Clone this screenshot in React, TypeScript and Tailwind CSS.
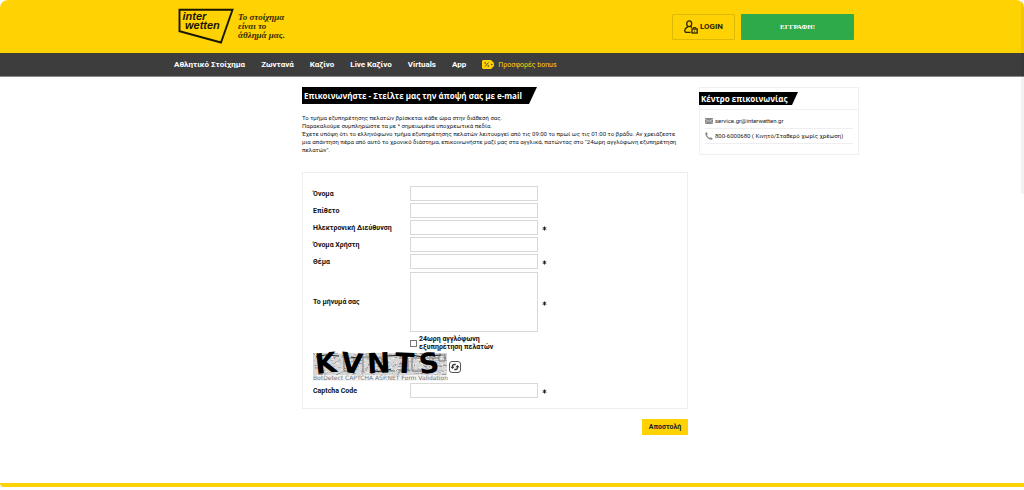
import React from "react";

const navItems = ["Αθλητικό Στοίχημα", "Ζωντανά", "Καζίνο", "Live Καζίνο", "Virtuals", "App"];

const fields = [
  { id: "first-name", label: "Όνομα", required: false },
  { id: "last-name", label: "Επίθετο", required: false },
  { id: "email", label: "Ηλεκτρονική Διεύθυνση", required: true },
  { id: "username", label: "Όνομα Χρήστη", required: false },
  { id: "subject", label: "Θέμα", required: true },
];

const captcha = [
  { letter: "K", style: "-rotate-6" },
  { letter: "V", style: "rotate-6" },
  { letter: "N", style: "-rotate-3" },
  { letter: "T", style: "rotate-3" },
  { letter: "S", style: "-rotate-6" },
];

const specks = Array.from({ length: 420 }, (_, i) => ({
  x: (i * 47 + ((i * i) % 31) * 5) % 133,
  y: (i * 13 + ((i * i) % 17) * 3) % 22,
  w: 1 + (i % 3),
  dark: i % 4 === 0,
}));

function Logo() {
  return (
    <svg viewBox="0 0 56 38" className="h-[38px] w-14" role="img" aria-label="Interwetten">
      <path d="M1.5 1.8H54.5L43 34.5 1.5 23.2Z" fill="none" stroke="#1a1700" strokeWidth="1.9" />
      <g fontFamily="Liberation Sans, Arial, sans-serif" fontWeight="700" fontStyle="italic" fontSize="11" fill="#1a1700">
        <text x="4.5" y="12">inter</text>
        <text x="7" y="21">wetten</text>
      </g>
    </svg>
  );
}

function UserLock() {
  return (
    <svg viewBox="0 0 14 14" className="h-3.5 w-3.5 shrink-0" fill="none" stroke="#2b2400" strokeWidth="1.3" aria-hidden="true">
      <ellipse cx="5.2" cy="3.7" rx="2.5" ry="2.9" />
      <path d="M3.8 6.3C3.5 7.9.8 7.5.8 10.4c0 1.3.6 1.9 1.8 1.9h4M6.6 6.3c.3.8 1 .9 1.6 1.2" />
      <rect x="8" y="9" width="5.2" height="4" />
      <path d="M9.3 9V7.5h2.6V9M10.6 10.5v1.2" strokeWidth="0.9" />
    </svg>
  );
}

function Star() {
  return (
    <svg viewBox="0 0 5 5" className="mt-[2px] h-[5px] w-[5px]" stroke="#222" strokeWidth="1" aria-hidden="true">
      <path d="M2.5 .5v4M.7 1.5l3.6 2M4.3 1.5l-3.6 2" />
    </svg>
  );
}

function Captcha() {
  return (
    <div className="w-[134px] shrink-0">
      <div className="relative h-[22px] bg-[#d6d6d6]">
        <svg viewBox="0 0 134 22" className="absolute inset-0 h-full w-full" aria-hidden="true">
          {specks.map((s, i) => (
            <rect key={i} x={s.x} y={s.y} width={s.w} height="1" fill={s.dark ? "#999" : i % 2 ? "#b8b8b8" : "#ececec"} />
          ))}
          <path
            d="M31 5h10v13H31zM44 4h12M50 4v14M60 5h9v5h-9v8h9M74 5v13h8M86 5h9M86 11h8M86 18h9V5M99 5h11M99 5v13h11M114 5h12M120 5v12M126 2h6v6h-6z"
            fill="none"
            stroke="#777"
            strokeWidth="1"
          />
          <path d="M3 4l9-2 14 1M38 4l6 1M60 18l10 1 8-3M72 3l26-1 12 2M116 3l12-1" fill="none" stroke="#222" strokeWidth="1" />
        </svg>
        <div className="relative flex h-full items-center justify-between pr-2 pl-[2px] font-['DejaVu_Sans',sans-serif] text-[28px] leading-[22px] font-bold text-black">
          {captcha.map((c) => (
            <span key={c.letter} className={c.style}>{c.letter}</span>
          ))}
        </div>
      </div>
      <p className="bg-[#f3f3f3] text-center font-['DejaVu_Sans',sans-serif] text-[6px] leading-[6px] font-normal whitespace-nowrap text-[#777]">
        BotDetect CAPTCHA ASP.NET Form Validation
      </p>
    </div>
  );
}

const inputStyle = "w-32 border border-[#d8d8d8] bg-white px-1 text-[7px] outline-none";

export default function App() {
  return (
    <div className="relative flex min-h-screen flex-col bg-white font-[Roboto,'Liberation_Sans',sans-serif] text-[7px] leading-2 text-[#222]">
      <div className="absolute top-0 right-0 h-[194px] w-[3px] bg-black/5" />
      <header className="rounded-t-lg bg-[#ffd204]">
        <div className="mx-auto flex h-[53px] max-w-[694px] items-center px-[5px]">
          <a href="#" className="ml-2 flex items-center gap-1">
            <Logo />
            <span className="font-['Liberation_Serif',serif] text-[9px] leading-[9px] font-bold text-[#332a00] italic">
              Το στοίχημα<br />είναι το<br />άθλημά μας.
            </span>
          </a>
          <div className="ml-auto flex gap-[6px]">
            <button className="flex h-[26px] w-[63px] items-center justify-center gap-[2px] rounded-[1px] border border-[#dfb800] text-[8px] font-bold text-[#2b2400]">
              <UserLock />
              LOGIN
            </button>
            <button className="h-[26px] w-[113px] rounded-[1px] bg-[#2eaa4a] font-['Liberation_Serif',serif] text-[7px] font-bold text-white">
              ΕΓΓΡΑΦΗ!
            </button>
          </div>
        </div>
      </header>

      <nav className="border-b border-[#8a8a8a] bg-[#3d3d3d]">
        <ul className="mx-auto flex h-[23px] max-w-[694px] items-center gap-4 px-[9px] text-[8px] font-bold text-white">
          {navItems.map((n) => (
            <li key={n}><a href="#">{n}</a></li>
          ))}
          <li>
            <a href="#" className="flex items-center gap-1 text-[7px] font-normal text-[#ffd204]">
              <svg viewBox="0 0 12 9" className="h-[9px] w-3" aria-hidden="true">
                <path d="M1 0h8l3 3v3L9 9H1L0 8V1Z" fill="#ffd204" />
                <path d="M3 6.5l3.5-4" stroke="#3d3d3d" strokeWidth=".9" />
                <circle cx="3.2" cy="3" r=".8" fill="#3d3d3d" />
                <circle cx="6.3" cy="6" r=".8" fill="#3d3d3d" />
                <circle cx="9.8" cy="4.5" r=".8" fill="#3d3d3d" />
              </svg>
              Προσφορές bonus
            </a>
          </li>
        </ul>
      </nav>

      <div className="mx-auto flex w-full max-w-[694px] flex-1 items-start gap-[11px] pt-[10px] pl-[137px]">
        <main className="min-w-0 flex-1">
          <h1 className="w-[235px] bg-black px-[2px] font-['Open_Sans','Noto_Sans',sans-serif] text-[8px] leading-[17px] font-bold whitespace-nowrap text-white [clip-path:polygon(0_0,100%_0,calc(100%-8px)_100%,0_100%)]">
            Επικοινωνήστε - Στείλτε μας την άποψή σας με e-mail
          </h1>
          <p className="mt-[10px] pr-1 text-[6px] leading-2">
            Το τμήμα εξυπηρέτησης πελατών βρίσκεται κάθε ώρα στην διάθεσή σας.<br />
            Παρακαλούμε συμπληρώστε τα με * σημειωμένα υποχρεωτικά πεδία.<br />
            Έχετε υπόψη ότι το ελληνόφωνο τμήμα εξυπηρέτησης πελατών λειτουργεί από τις 09:00 το πρωί ως τις 01:00 το βράδυ. Αν χρειάζεστε μια απάντηση πέρα από αυτό το χρονικό διάστημα, επικοινωνήστε μαζί μας στα αγγλικά, πατώντας στο "24ωρη αγγλόφωνη εξυπηρέτηση πελατών".
          </p>

          <form onSubmit={(e: React.FormEvent) => e.preventDefault()}>
            <div className="mt-[18px] flex flex-col gap-[2px] border border-[#eee] px-[10px] pt-[13px] pb-[10px] font-bold text-[#111]">
              {fields.map((f) => (
                <div key={f.id} className="flex items-center">
                  <label htmlFor={f.id} className="w-[97px]">{f.label}</label>
                  <input id={f.id} required={f.required} className={`h-[15px] ${inputStyle} mr-1`} />
                  {f.required && <Star />}
                </div>
              ))}
              <div className="flex items-center pt-px">
                <label htmlFor="message" className="w-[97px]">Το μήνυμά σας</label>
                <textarea id="message" required className={`h-[60px] resize-none ${inputStyle} mr-1`} />
                <Star />
              </div>
              <label className="ml-[97px] flex items-center gap-[2px] pt-px">
                <input type="checkbox" className="h-[7px] w-[7px] appearance-none border border-[#777] bg-white checked:bg-[#777]" />
                <span>24ωρη αγγλόφωνη<br />εξυπηρέτηση πελατών</span>
              </label>
              <div className="flex items-center gap-[2px]">
                <Captcha />
                <button type="button" aria-label="Νέος κωδικός" className="flex h-3 w-3 items-center justify-center rounded-[3px] border border-[#555]">
                  <svg viewBox="0 0 10 10" className="h-[10px] w-[10px] shrink-0" fill="none" stroke="#333" strokeWidth="1.3" aria-hidden="true">
                    <path d="M2.5 6V4.2c0-1 .7-1.7 1.7-1.7h1.5M7.5 4v1.8c0 1-.7 1.7-1.7 1.7H4.3" />
                    <path d="M.5 4.8h4L2.5 7ZM5.5 5.2h4L7.5 3Z" fill="#333" stroke="none" />
                  </svg>
                </button>
              </div>
              <div className="flex items-center">
                <label htmlFor="captcha-code" className="w-[97px]">Captcha Code</label>
                <input id="captcha-code" required className={`h-[15px] ${inputStyle} mr-1`} />
                <Star />
              </div>
            </div>
            <button type="submit" className="mt-[10px] ml-auto block h-4 w-[46px] bg-[#ffd204] text-[7px] font-bold text-[#222]">
              Αποστολή
            </button>
          </form>
        </main>

        <aside className="w-40 shrink-0 border border-[#f0f0f0] pb-[10px]">
          <div className="border-b border-[#f0f0f0] pt-1 pb-1">
            <h2 className="-ml-px w-[99px] bg-black px-[2px] font-['Open_Sans','Noto_Sans',sans-serif] text-[8px] leading-[13px] font-bold whitespace-nowrap text-white [clip-path:polygon(0_0,100%_0,calc(100%-6px)_100%,0_100%)]">
              Κέντρο επικοινωνίας
            </h2>
          </div>
          <ul className="px-[5px] pt-1 text-[6px] whitespace-nowrap">
            <li className="flex h-[15px] items-center gap-[2px] border-b border-[#eee]">
              <svg viewBox="0 0 8 6" className="h-[6px] w-2 shrink-0" aria-hidden="true">
                <path d="M0 0h8v6H0Z" fill="#888" />
                <path d="M0 1l4 2.4L8 1M0 5.5l2.5-2.4M8 5.5L5.5 3.1" fill="none" stroke="#eee" strokeWidth=".6" />
              </svg>
              <a href="mailto:service.gr@interwetten.gr">service.gr@interwetten.gr</a>
            </li>
            <li className="flex h-[15px] items-center gap-[2px] border-b border-[#eee]">
              <svg viewBox="0 0 8 8" className="h-2 w-2 shrink-0" aria-hidden="true">
                <path d="M.3.7L1.8.2l1 2-.9.9c.6 1.3 1.4 2.2 2.7 2.9l1-.8 2 1-.4 1.5C3.5 8 .1 4.5.3.7Z" fill="#888" />
              </svg>
              <span>800-6000680 ( Κινητό/Σταθερό χωρίς χρέωση)</span>
            </li>
          </ul>
        </aside>
      </div>

      <footer className="mb-[3px] h-1 rounded-bl-sm bg-[#ffd204]" />
    </div>
  );
}
